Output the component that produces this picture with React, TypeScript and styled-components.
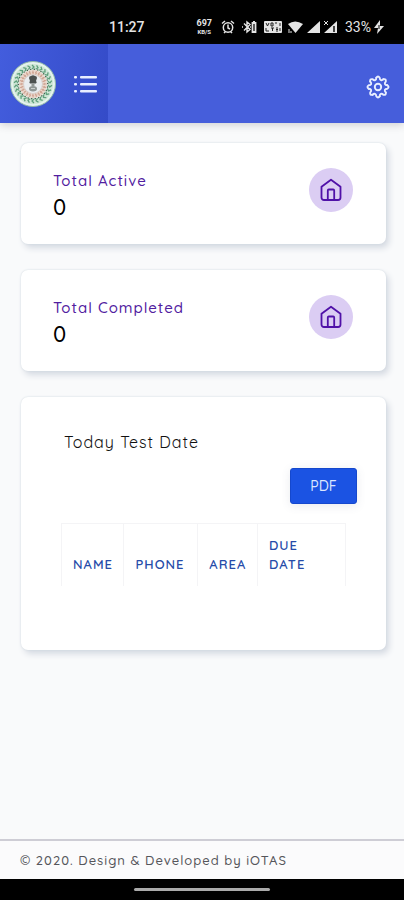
import React from "react";
import styled, { createGlobalStyle } from "styled-components";

const GlobalStyle = createGlobalStyle`
  *, *::before, *::after { box-sizing: border-box; }
  body {
    margin: 0;
    background: #f9fafb;
    color: #111;
    font-family: Quicksand, Lato, sans-serif;
    letter-spacing: 1px;
  }
`;

const Page = styled.div`
  min-height: 100vh;
  display: flex;
  flex-direction: column;
`;

const StatusBar = styled.div`
  display: flex;
  align-items: center;
  justify-content: space-between;
  height: 44px;
  padding: 10px 20px 0 109px;
  background: #000;
  color: #e4e4e4;
  font: 500 14px/20px Roboto, sans-serif;
  letter-spacing: 0;
`;

const StatusIcons = styled.div`
  display: flex;
  align-items: center;
  gap: 3px;
  font-weight: 400;
  svg { display: block; }
`;

const NetSpeed = styled.span`
  display: flex;
  flex-direction: column;
  align-items: center;
  margin-right: 4px;
  font: 700 9px/9px Roboto, sans-serif;
  small { font-size: 6px; line-height: 7px; }
`;

const AppBar = styled.header`
  display: flex;
  height: 79px;
  background: #465edb;
  box-shadow: 0 2px 8px rgba(60, 60, 70, 0.22);
`;

const Brand = styled.div`
  display: flex;
  align-items: center;
  gap: 17px;
  width: 108px;
  padding-left: 9px;
  background: linear-gradient(100deg, #435ddd, #344bc8);
`;

const IconButton = styled.button`
  display: flex;
  padding: 0;
  border: 0;
  background: none;
  color: #e8eeff;
  cursor: pointer;
`;

const Tools = styled.div`
  flex: 1;
  display: flex;
  align-items: center;
  justify-content: flex-end;
  padding: 6px 14px 0 0;
`;

const Main = styled.main`
  flex: 1;
  display: flex;
  flex-direction: column;
  gap: 26px;
  padding: 20px 18px 20px 21px;
`;

const Card = styled.section`
  border-radius: 7px;
  background: #fff;
  box-shadow: 0 0 2px #cfd8df, 3px 4px 6px #d5dae2;
`;

const StatCard = styled(Card)`
  display: flex;
  justify-content: space-between;
  align-items: flex-start;
  padding: 25px 33px 24px 32px;
`;

const StatLabel = styled.h2`
  margin: 0;
  color: #5120a0;
  font-size: 15px;
  font-weight: 500;
  line-height: 26px;
`;

const StatValue = styled.p`
  margin: 0;
  color: #000;
  font-size: 22px;
  font-weight: 500;
  line-height: 26px;
`;

const StatIcon = styled.span`
  display: flex;
  align-items: center;
  justify-content: center;
  width: 44px;
  height: 44px;
  border-radius: 50%;
  background: #dbcdf3;
  color: #5011a8;
`;

const ReportCard = styled(Card)`
  display: flex;
  flex-direction: column;
  min-height: 253px;
  padding: 32px 29px 64px 40px;
`;

const ReportTitle = styled.h2`
  margin: 0 0 13px;
  padding-left: 3px;
  font-size: 16px;
  font-weight: 400;
  line-height: 26px;
`;

const PdfButton = styled.button`
  align-self: flex-end;
  width: 67px;
  height: 36px;
  padding: 0;
  border: 1px solid #1548cd;
  border-radius: 3px;
  background: #1b53e3;
  color: #dce7ff;
  font: 500 14px/20px Quicksand, Lato, sans-serif;
  box-shadow: 0 2px 10px rgba(80, 90, 120, 0.12);
  cursor: pointer;
`;

const Table = styled.table`
  width: calc(100% - 11px);
  margin-top: 19px;
  border-collapse: collapse;
  table-layout: fixed;
`;

const HeadCell = styled.th<{ $share: number }>`
  width: ${(p) => p.$share}%;
  padding: 12px 11px;
  border: 1px solid #f4f4f6;
  border-bottom: 0;
  color: #264ca9;
  font-size: 13px;
  font-weight: 600;
  line-height: 19px;
  text-align: left;
  vertical-align: bottom;
`;

const Footer = styled.footer`
  height: 40px;
  padding: 9px 20px;
  border-top: 2px solid #cecdd5;
  background: #fbfbfc;
  color: #55565b;
  font-size: 13px;
  font-weight: 500;
  line-height: 20px;
`;

const GestureBar = styled.div`
  display: flex;
  justify-content: center;
  height: 21px;
  padding-top: 9px;
  background: #000;
  &::after {
    content: "";
    width: 136px;
    height: 3px;
    border-radius: 2px;
    background: #aaa;
  }
`;

const ring = (count: number) =>
  Array.from({ length: count }, (_, i) => (i * 360) / count);

function Emblem() {
  return (
    <svg width="48" height="48" viewBox="0 0 48 48" role="img" aria-label="State emblem">
      <circle cx="24" cy="24" r="22.5" fill="#e5f3ed" stroke="#91baa9" />
      <circle cx="24" cy="24" r="17.5" fill="none" stroke="#cfe6d6" strokeWidth="5" />
      {ring(26).map((a) => (
        <path key={a} d="M23 5l2 2-2 2" fill="none" stroke="#5fa07c" strokeWidth="1.3" transform={`rotate(${a} 24 24)`} />
      ))}
      {ring(26).map((a) => (
        <circle key={a} cx="24" cy="9.300" r=".8" fill="#47634f" transform={`rotate(${a + 5} 24 24)`} />
      ))}
      <circle cx="24" cy="24" r="14" fill="#ead6cb" />
      {ring(24).map((a) => (
        <path key={a} d="M24 10.500v4M23 12l2 1" stroke="#cfa594" strokeWidth="1" transform={`rotate(${a} 24 24)`} />
      ))}
      <circle cx="24" cy="24" r="9.500" fill="#e9edf0" stroke="#d9cfca" />
      <path d="M20 18q0-2 2-2 2-1.500 4 0 2 0 2 2l-1 3q1.500 1 0 2.500h-6q-1.500-1.500 0-2.500z" fill="#4b504f" />
      <path d="M22.500 24h3v2h-3z" fill="#929996" />
      <ellipse cx="24" cy="28.700" rx="4" ry="2.700" fill="#8f9694" />
      <path d="M22 28.500h4" stroke="#c9cfcd" />
    </svg>
  );
}

function ListIcon() {
  return (
    <svg width="24" height="18" viewBox="0 0 24 18" fill="currentColor" aria-hidden="true">
      {[1, 8, 15].map((y) => (
        <g key={y}>
          <rect x="0" y={y} width="3" height="2.5" rx="1" />
          <rect x="6" y={y} width="17" height="2.5" rx="1" />
        </g>
      ))}
    </svg>
  );
}

function GearIcon() {
  return (
    <svg width="24" height="24" viewBox="0 0 24 24" fill="none" stroke="currentColor" strokeWidth="1.9" strokeLinejoin="round" aria-hidden="true">
      {ring(8).map((a) => (
        <path key={a} d="M10.300 2.700Q12 .200 13.700 2.700C13.800 5.300 15.700 6.100 17.400 4.200" strokeLinecap="round" transform={`rotate(${a} 12 12)`} />
      ))}
      <circle cx="12" cy="12" r="3.200" />
    </svg>
  );
}

function HouseIcon() {
  return (
    <svg width="22" height="24" viewBox="0 0 22 24" fill="none" stroke="currentColor" strokeWidth="1.8" strokeLinecap="round" strokeLinejoin="round" aria-hidden="true">
      <path d="M1.500 8.800 11 1.700l9.500 7.100V19.500a2.500 2.500 0 0 1-2.500 2.500H4a2.500 2.500 0 0 1-2.500-2.500z" />
      <path d="M7.800 21.500v-9a1 1 0 0 1 1-1h4.400a1 1 0 0 1 1 1v9" />
    </svg>
  );
}

function AlarmIcon() {
  return (
    <svg width="19" height="14" viewBox="0 0 19 14" fill="none" stroke="currentColor" strokeWidth="1.5" aria-hidden="true">
      <circle cx="9" cy="7.500" r="4.700" />
      <path d="M9 4.500V8l2 1M3 3.500l3-2.500M15 3.500 12 1M5 13l1.500-1.500M13 13l-1.500-1.500" />
    </svg>
  );
}

function BluetoothIcon() {
  return (
    <svg width="20" height="14" viewBox="0 0 20 14" fill="none" stroke="currentColor" strokeWidth="1.4" aria-hidden="true">
      <path d="m3 3.500 6 6L6 12V2l3 2.500-6 6M1 7h1M9 7h1" />
      <path d="M11.500 3h3v9h-3zM12 2h2" strokeWidth="1.800" />
    </svg>
  );
}

function VolteIcon() {
  return (
    <svg width="21" height="14" viewBox="0 0 21 14" fill="none" aria-hidden="true">
      <rect x="0" y="1" width="18" height="12" rx="1" fill="currentColor" />
      <path d="m2 3 1.500 3L5 3M7 3h2v3H7zM11 3h2M2 8v3h3M7 8h3M8.500 8v3M12 8h2M12 9.500h2M12 11h2M16 3v3M16 8v3" stroke="#222" />
    </svg>
  );
}

function SignalIcons() {
  return (
    <svg width="54" height="14" viewBox="0 0 54 14" fill="currentColor" aria-hidden="true">
      <path d="M0 4q7-5 15 0L7.500 13z" />
      <path d="M1 9v4M3 11v2" stroke="currentColor" />
      <path d="M19 13 32 1v12zM36 13 49 1v12z" />
      <path d="m36 1 4 4M40 1l-4 4" stroke="currentColor" />
      <path d="M46 6v6" stroke="#000" strokeWidth="1.400" />
    </svg>
  );
}

function ChargingIcon() {
  return (
    <svg width="10" height="14" viewBox="0 0 10 14" fill="currentColor" aria-hidden="true">
      <path d="M6 0 0 8h4l-1 6 7-8H6z" />
      <path d="M5 5v4" stroke="#000" />
    </svg>
  );
}

const stats = [
  { label: "Total Active", value: 0 },
  { label: "Total Completed", value: 0 },
];

const columns = [
  { label: "NAME", share: 22 },
  { label: "PHONE", share: 26 },
  { label: "AREA", share: 21 },
  { label: "DUE DATE", share: 31 },
];

export default function App() {
  return (
    <Page>
      <GlobalStyle />
      <StatusBar>
        <time>11:27</time>
        <StatusIcons>
          <NetSpeed>697<small>KB/S</small></NetSpeed>
          <AlarmIcon />
          <BluetoothIcon />
          <VolteIcon />
          <SignalIcons />
          <span>33%</span>
          <ChargingIcon />
        </StatusIcons>
      </StatusBar>
      <AppBar>
        <Brand>
          <Emblem />
          <IconButton type="button" aria-label="Menu"><ListIcon /></IconButton>
        </Brand>
        <Tools>
          <IconButton type="button" aria-label="Settings"><GearIcon /></IconButton>
        </Tools>
      </AppBar>
      <Main>
        {stats.map((s) => (
          <StatCard key={s.label}>
            <div>
              <StatLabel>{s.label}</StatLabel>
              <StatValue>{s.value}</StatValue>
            </div>
            <StatIcon><HouseIcon /></StatIcon>
          </StatCard>
        ))}
        <ReportCard>
          <ReportTitle>Today Test Date</ReportTitle>
          <PdfButton type="button">PDF</PdfButton>
          <Table>
            <thead>
              <tr>
                {columns.map((c) => (
                  <HeadCell key={c.label} scope="col" $share={c.share}>{c.label}</HeadCell>
                ))}
              </tr>
            </thead>
          </Table>
        </ReportCard>
      </Main>
      <Footer>© 2020. Design &amp; Developed by iOTAS</Footer>
      <GestureBar />
    </Page>
  );
}
